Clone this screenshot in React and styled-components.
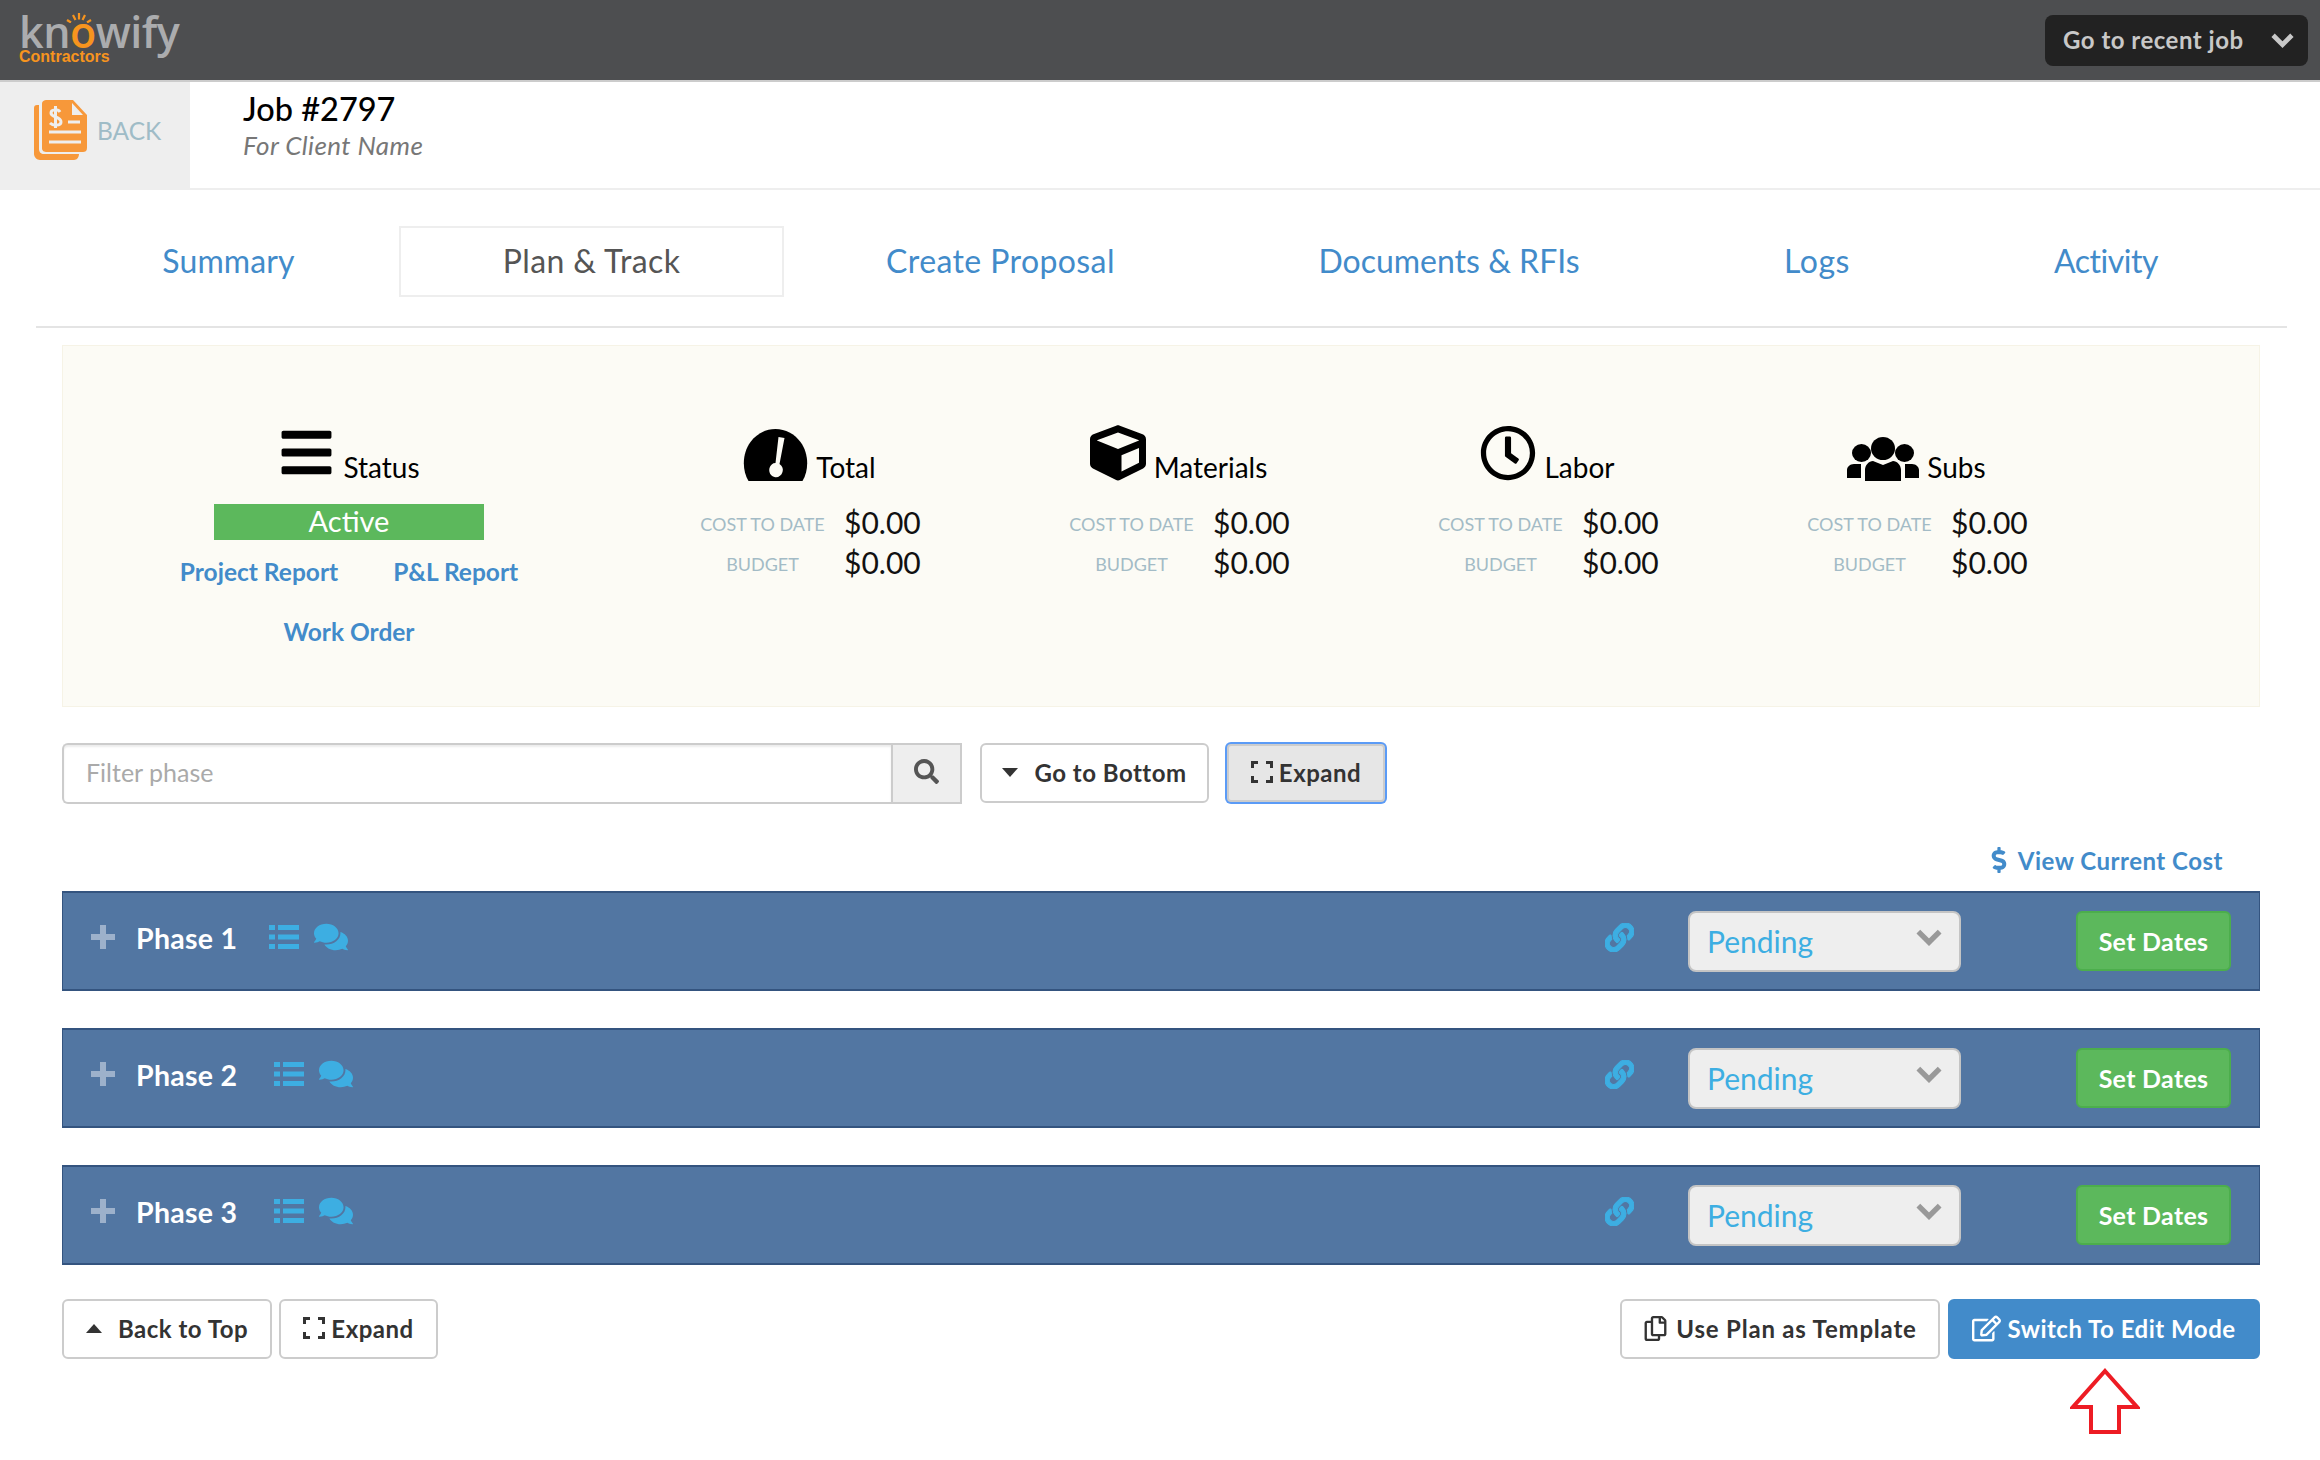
import React from 'react';
import styled, { createGlobalStyle } from 'styled-components';
import {
  FaSearch, FaComments, FaLink, FaDollarSign,
  FaRegEdit, FaRegCopy, FaRegClock, FaCube, FaBars,
} from 'react-icons/fa';

const GlobalStyle = createGlobalStyle`
  html, body { margin: 0; padding: 0; background: #fff; }
  body { font-family: Lato, "Open Sans", sans-serif; color: #333; }
  * { box-sizing: border-box; }
`;

const Page = styled.div`
  width: 2320px;
  height: 1460px;
  overflow: hidden;
`;

const TopBar = styled.header`
  height: 82px;
  background: #4d4e50;
  border-bottom: 2px solid #ccc;
  display: flex;
  align-items: flex-start;
  justify-content: space-between;
  padding: 15px 12px 0 19px;
`;

const Logo = styled.div`
  position: relative;
  line-height: 1;
  margin-top: -6px;
`;

const LogoWord = styled.div`
  font-family: "Open Sans", sans-serif;
  font-size: 43px;
  font-weight: 600;
  color: #abacae;
  letter-spacing: -0.5px;
  height: 40px;
  line-height: 46px;
  span { color: #f7941e; }
`;

const LogoSub = styled.div`
  font-family: "Liberation Sans", sans-serif;
  font-size: 16px;
  font-weight: 700;
  color: #f7941e;
`;

const Rays = styled.svg`
  position: absolute;
  left: 47px;
  top: 4px;
`;

const RecentJob = styled.button`
  width: 263px;
  height: 51px;
  background: #222;
  border: none;
  border-radius: 8px;
  color: #c8c8c8;
  font-family: Lato, sans-serif;
  font-size: 24px;
  font-weight: 700;
  display: flex;
  align-items: center;
  justify-content: space-between;
  padding: 0 14px 3px 18px;
  letter-spacing: 0.5px;
  svg { margin-top: 3px; }
`;

const JobHeader = styled.div`
  height: 108px;
  display: flex;
  border-bottom: 2px solid #eee;
`;

const BackPanel = styled.div`
  width: 190px;
  background: #eee;
  display: flex;
  align-items: center;
  padding: 0 0 10px 34px;
  gap: 9px;
  font-size: 24.5px;
  color: #9fbcc7;
`;

const JobInfo = styled.div`
  padding: 7px 0 0 53px;
`;

const JobTitle = styled.div`
  font-size: 32.5px;
  line-height: 40px;
  color: #000;
  font-weight: 500;
`;

const JobClient = styled.div`
  font-size: 26px;
  line-height: 30px;
  font-style: italic;
  color: #777;
  letter-spacing: 0.4px;
  margin-top: 1px;
`;

const Tabs = styled.nav`
  margin: 0 33px 0 36px;
  padding: 36px 0 29px 22px;
  border-bottom: 2px solid #e4e4e4;
  display: flex;
`;

const Tab = styled.div`
  width: ${p => p.$w}px;
  height: 71px;
  display: flex;
  align-items: center;
  justify-content: center;
  font-size: 32px;
  letter-spacing: ${p => p.$ls}px;
  padding-bottom: 2px;
  color: ${p => (p.$active ? '#555' : '#428bca')};
  border: ${p => (p.$active ? '2px solid #eee' : 'none')};
`;

const Main = styled.main`
  padding: 17px 60px 0 62px;
`;

const SummaryPanel = styled.section`
  height: 362px;
  background: #fcfbf5;
  border: 1px solid #f6f3e6;
  padding: 81px 0 0 8px;
  display: grid;
  grid-template-columns: 554px repeat(4, 369px);
`;

const Column = styled.div`
  display: flex;
  flex-direction: column;
`;

const StatusColumn = styled(Column)`
  padding-left: 2px;
`;

const ColumnHead = styled.div`
  height: 54px;
  display: flex;
  align-items: flex-end;
  justify-content: center;
  gap: 8px;
  font-size: 28px;
  line-height: 26px;
  color: #000;
  svg { display: block; flex: none; }
`;

const HeadText = styled.span`
  position: relative;
  top: -1px;
`;

const StatusBar = styled.div`
  width: 270px;
  height: 36px;
  margin: 23px auto 0;
  background: #5cb85c;
  color: #fff;
  font-size: 29px;
  line-height: 34px;
  text-align: center;
`;

const ReportLinks = styled.div`
  display: flex;
  justify-content: center;
  flex-wrap: wrap;
  column-gap: 55px;
  margin-top: 17px;
`;

const ReportLink = styled.a`
  font-size: 24.5px;
  font-weight: 700;
  line-height: 30px;
  color: #428bca;
  flex: ${p => (p.$wide ? '0 0 100%' : '0 0 auto')};
  text-align: center;
  margin-top: ${p => (p.$wide ? '30px' : '0')};
`;

const CostTable = styled.div`
  display: grid;
  grid-template-columns: 125px auto;
  column-gap: 19px;
  margin: 22px 0 0 75px;
`;

const CostLabel = styled.div`
  height: 40px;
  line-height: 42px;
  font-size: 18px;
  color: #a3bbc6;
  text-align: center;
  white-space: nowrap;
`;

const CostValue = styled.div`
  height: 40px;
  line-height: 38px;
  font-size: 30px;
  color: #111;
`;

const Toolbar = styled.div`
  display: flex;
  margin-top: 36px;
  height: 61px;
`;

const FilterInput = styled.div`
  width: 829px;
  height: 61px;
  border: 2px solid #ccc;
  border-right: none;
  border-radius: 6px 0 0 6px;
  box-shadow: inset 0 2px 2px rgba(0, 0, 0, 0.08);
  font-size: 25px;
  color: #aaa;
  line-height: 55px;
  padding-left: 22px;
`;

const SearchAddon = styled.div`
  width: 71px;
  height: 61px;
  background: #eee;
  border: 2px solid #ccc;
  display: flex;
  align-items: center;
  justify-content: center;
  color: #555;
  font-size: 25px;
  padding-bottom: 4px;
`;

const Button = styled.button`
  height: 60px;
  width: ${p => p.$w}px;
  margin-left: ${p => p.$ml || 0}px;
  background: ${p => (p.$primary ? '#428bca' : '#fff')};
  border: 2px solid ${p => (p.$primary ? '#428bca' : '#ccc')};
  border-radius: 6px;
  color: ${p => (p.$primary ? '#fff' : '#333')};
  font-family: Lato, sans-serif;
  font-size: 24px;
  font-weight: 700;
  letter-spacing: ${p => p.$ls || 0.5}px;
  display: flex;
  align-items: center;
  justify-content: center;
  gap: ${p => p.$gap || 6}px;
  padding: 0 0 2px;
  svg { flex: none; }
`;

const FocusedButton = styled(Button)`
  height: 58px;
  margin-top: 1px;
  background: #e6e6e6;
  border-radius: 4px;
  box-shadow: 0 0 0 2px #5b9bf6;
`;

const CostLinkRow = styled.div`
  display: flex;
  justify-content: flex-end;
  align-items: center;
  gap: 6px;
  height: 26px;
  margin-top: 43px;
  padding-right: 37px;
  color: #428bca;
  font-size: 24px;
  font-weight: 700;
  letter-spacing: 0.5px;
`;

const PhaseList = styled.div`
  display: flex;
  flex-direction: column;
  gap: 37px;
  margin-top: 18px;
`;

const PhaseRow = styled.div`
  height: 100px;
  background: #5276a2;
  border: 1px solid #34547f;
  border-top-width: 2px;
  border-bottom-width: 2px;
  display: flex;
  align-items: center;
  padding: 0 28px 0 28px;
`;

const PhasePlus = styled.svg`
  flex: none;
  margin-top: -8px;
`;

const PhaseName = styled.span`
  color: #fff;
  font-size: 28.500px;
  font-weight: 700;
  letter-spacing: 0.3px;
  margin: -6px ${p => p.$gap}px 0 21px;
`;

const PhaseIcons = styled.span`
  display: flex;
  align-items: center;
  gap: 15px;
  color: #3daee2;
  margin-top: -8px;
`;

const LinkIcon = styled.span`
  margin-left: auto;
  color: #3daee2;
  display: flex;
  margin-top: -8px;
  margin-right: -1px;
  svg { stroke: currentColor; stroke-width: 18px; }
`;

const StatusSelect = styled.div`
  width: 273px;
  height: 61px;
  margin-left: 55px;
  background: #eee;
  border: 2px solid #c4c4c4;
  border-radius: 8px;
  display: flex;
  align-items: center;
  justify-content: space-between;
  padding: 0 17px;
  font-size: 30px;
  color: #3daee2;
`;

const SelectChevron = styled.span`
  color: #999;
  margin-bottom: 8px;
  display: flex;
`;

const SetDates = styled.button`
  width: 155px;
  height: 60px;
  margin-left: 115px;
  background: #5cb85c;
  border: 2px solid #4cae4c;
  border-radius: 6px;
  color: #fff;
  font-family: Lato, sans-serif;
  font-size: 25px;
  font-weight: 700;
  letter-spacing: 0.3px;
  padding: 0;
`;

const BottomBar = styled.div`
  display: flex;
  align-items: center;
  margin-top: 34px;
`;

const Spacer = styled.div`
  flex: 1;
`;

const ArrowRow = styled.div`
  display: flex;
  justify-content: flex-end;
  padding: 9px 120px 0 0;
`;

const ExpandIcon = () => (
  <svg width="22" height="22" viewBox="0 0 22 22" fill="none" stroke="currentColor" strokeWidth="3">
    <path d="M1.5 7V1.5H7M15 1.5h5.500V7M20.500 15v5.500H15M7 20.500H1.500V15" />
  </svg>
);

const Caret = ({ up }) => (
  <svg width="16" height="9" viewBox="0 0 16 9" fill="currentColor">
    <path d={up ? 'M8 0l8 9H0z' : 'M0 0h16L8 9z'} />
  </svg>
);

const Chevron = ({ w, h, sw }) => (
  <svg width={w} height={h} viewBox="0 0 22 14" fill="none" stroke="currentColor" strokeWidth={sw}>
    <path d="M2 2l9 9 9-9" />
  </svg>
);

const DocIcon = () => (
  <svg width="54" height="60" viewBox="0 0 54 60" fill="#f7983a" style={{ flex: 'none' }}>
    <path d="M3 5h2v44c0 3 2 5 5 5h35c0 3-2 6-5 6H6c-3 0-6-3-6-6V8c0-2 1-3 3-3z" />
    <path d="M13 0h26l14 15v33c0 3-2 4-4 4H13c-3 0-5-1-5-4V4c0-3 2-4 5-4z" />
    <path d="M38 3l11 12H38z" fill="#eee" />
    <path d="M15 32h32M15 42h32M34 22h12" stroke="#eee" strokeWidth="3" fill="none" />
    <path d="M26 12c-2-3-9-3-9 1 0 5 10 3 10 9 0 4-8 4-11 1M21.500 6v22" fill="none" stroke="#eee" strokeWidth="3" />
  </svg>
);

const GaugeIcon = () => (
  <svg width="65" height="52" viewBox="0 0 64 52">
    <path d="M5 52C-2 40-1 24 7 13 13 5 22 0 32 0s19 5 25 13c8 11 9 27 2 39z" fill="#000" />
    <path d="M35 8l6 1-5 26c3 2 4 5 3 8-1 4-5 6-8 5-4-1-6-5-5-9 1-3 3-5 6-5z" fill="#fcfbf5" />
  </svg>
);

const UsersIcon = () => (
  <svg width="72" height="44" viewBox="0 0 72 44" fill="#000">
    <ellipse cx="36" cy="11.500" rx="12" ry="11.500" />
    <ellipse cx="14.500" cy="16" rx="9.500" ry="9" />
    <ellipse cx="57.500" cy="16" rx="9.500" ry="9" />
    <path d="M18 44V33c0-5 4-9 8-9l10 4 10-4c4 0 8 4 8 9v11z" />
    <path d="M0 41V33c0-3 3-6 7-6h7v14zM72 41V33c0-3-3-6-7-6h-7v14z" />
  </svg>
);

const ListIcon = () => (
  <svg width="30" height="24" viewBox="0 0 30 24" fill="currentColor">
    <path d="M0 0h6v5H0zM9 0h21v5H9zM0 9.500h6v5H0zM9 9.500h21v5H9zM0 19h6v5H0zM9 19h21v5H9z" />
  </svg>
);

const ArrowIcon = () => (
  <svg width="70" height="67" viewBox="0 0 70 67" fill="#fff" stroke="#ed1c24" strokeWidth="4">
    <path d="M35 3L67 39H49V64H21V39H3z" />
  </svg>
);

const costColumns = [
  { name: 'Total', icon: <GaugeIcon /> },
  { name: 'Materials', icon: <FaCube size={56} /> },
  { name: 'Labor', icon: <FaRegClock size={56} /> },
  { name: 'Subs', icon: <UsersIcon /> },
];

const phases = [
  { name: 'Phase 1', gap: 32 },
  { name: 'Phase 2', gap: 37 },
  { name: 'Phase 3', gap: 37 },
];

const tabs = [
  { label: 'Summary', w: 341, ls: 0.1 },
  { label: 'Plan & Track', w: 385, active: true, ls: 0.4 },
  { label: 'Create Proposal', w: 433, ls: 0.4 },
  { label: 'Documents & RFIs', w: 464, ls: 0 },
  { label: 'Logs', w: 272, ls: 0.5 },
  { label: 'Activity', w: 306, ls: -0.5 },
];

export default function App() {
  return (
    <Page>
      <GlobalStyle />
      <TopBar>
        <Logo>
          <Rays width="26" height="10" viewBox="0 0 26 10" stroke="#f7941e" strokeWidth="2.200" fill="none">
            <path d="M1 7l4 2.500M7 2l2.500 5M13 0v6.500M19 2l-2.500 5M25 7l-4 2.500" />
          </Rays>
          <LogoWord>kn<span>o</span>wify</LogoWord>
          <LogoSub>Contractors</LogoSub>
        </Logo>
        <RecentJob>
          Go to recent job
          <Chevron w={23} h={15} sw={4.5} />
        </RecentJob>
      </TopBar>

      <JobHeader>
        <BackPanel>
          <DocIcon />
          BACK
        </BackPanel>
        <JobInfo>
          <JobTitle>Job #2797</JobTitle>
          <JobClient>For Client Name</JobClient>
        </JobInfo>
      </JobHeader>

      <Tabs>
        {tabs.map(t => (
          <Tab key={t.label} $w={t.w} $ls={t.ls} $active={t.active}>{t.label}</Tab>
        ))}
      </Tabs>

      <Main>
        <SummaryPanel>
          <StatusColumn>
            <ColumnHead>
              <FaBars size={57} />
              <HeadText>Status</HeadText>
            </ColumnHead>
            <StatusBar>Active</StatusBar>
            <ReportLinks>
              <ReportLink>Project Report</ReportLink>
              <ReportLink>P&amp;L Report</ReportLink>
              <ReportLink $wide>Work Order</ReportLink>
            </ReportLinks>
          </StatusColumn>
          {costColumns.map(c => (
            <Column key={c.name}>
              <ColumnHead>
                {c.icon}
                <HeadText>{c.name}</HeadText>
              </ColumnHead>
              <CostTable>
                <CostLabel>COST TO DATE</CostLabel>
                <CostValue>$0.00</CostValue>
                <CostLabel>BUDGET</CostLabel>
                <CostValue>$0.00</CostValue>
              </CostTable>
            </Column>
          ))}
        </SummaryPanel>

        <Toolbar>
          <FilterInput>Filter phase</FilterInput>
          <SearchAddon><FaSearch /></SearchAddon>
          <Button $w={229} $ml={18} $gap={16}><Caret />Go to Bottom</Button>
          <FocusedButton $w={158} $ml={18}><ExpandIcon />Expand</FocusedButton>
        </Toolbar>

        <CostLinkRow>
          <FaDollarSign size={26} />
          View Current Cost
        </CostLinkRow>

        <PhaseList>
          {phases.map(p => (
            <PhaseRow key={p.name}>
              <PhasePlus width="24" height="24" viewBox="0 0 24 24" fill="#9db1cb">
                <path d="M9 0h6v9h9v6h-9v9H9v-9H0V9h9z" />
              </PhasePlus>
              <PhaseName $gap={p.gap}>{p.name}</PhaseName>
              <PhaseIcons>
                <ListIcon />
                <FaComments size={34} />
              </PhaseIcons>
              <LinkIcon><FaLink size={29} /></LinkIcon>
              <StatusSelect>
                Pending
                <SelectChevron><Chevron w={26} h={17} sw={4.5} /></SelectChevron>
              </StatusSelect>
              <SetDates>Set Dates</SetDates>
            </PhaseRow>
          ))}
        </PhaseList>

        <BottomBar>
          <Button $w={210} $gap={16}><Caret up />Back to Top</Button>
          <Button $w={159} $ml={7}><ExpandIcon />Expand</Button>
          <Spacer />
          <Button $w={320} $gap={8} $ls={0.8}><FaRegCopy size={25} />Use Plan as Template</Button>
          <Button $w={312} $ml={8} $primary><FaRegEdit size={29} />Switch To Edit Mode</Button>
        </BottomBar>

        <ArrowRow>
          <ArrowIcon />
        </ArrowRow>
      </Main>
    </Page>
  );
}
